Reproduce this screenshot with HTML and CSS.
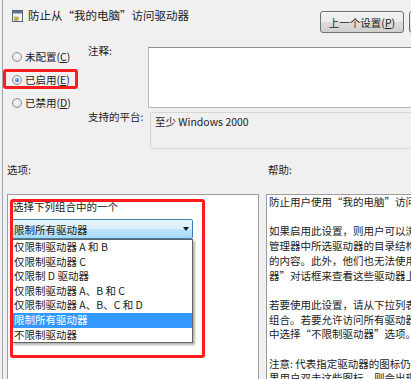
FILE: index.html
```html
<!DOCTYPE html>
<html lang="zh-CN">
<head>
    <meta charset="UTF-8">
    <meta name="viewport" content="width=device-width, initial-scale=1.0">
    <title>防止从“我的电脑”访问驱动器</title>
    <link rel="stylesheet" href="styles.css">
</head>
<body>
    <div class="dialog">
        <div class="head">
            <svg class="policy-icon" viewBox="0 0 11 12" width="11" height="12">
                <rect x="0.5" y="0.5" width="10" height="11" fill="#f3f5f8" stroke="#56677a"/>
                <rect x="1" y="1" width="9" height="2.5" fill="#5f7389"/>
                <rect x="2.2" y="7" width="4" height="3.4" fill="#e9c64c" stroke="#b28a1d" stroke-width="0.5"/>
                <path d="M2.9 8.7l1 1 1.6-2" stroke="#3b8b2e" fill="none" stroke-width="0.8"/>
            </svg>
            <div class="title">防止从“我的电脑”访问驱动器</div>
            <div class="nav">
                <button class="btn">上一个设置(<u>P</u>)</button>
                <button class="btn">下一个设置(<u>N</u>)</button>
            </div>
        </div>

        <div class="setup">
            <div class="states">
                <div class="state"><span class="radio"></span><span>未配置(<u>C</u>)</span></div>
                <div class="state"><span class="radio on"></span><span>已启用(<u>E</u>)</span></div>
                <div class="state"><span class="radio"></span><span>已禁用(<u>D</u>)</span></div>
            </div>
            <div class="fields">
                <span class="field-label">注释:</span>
                <div class="comment"></div>
                <span class="field-label platform-label">支持的平台:</span>
                <div class="platform">至少 Windows 2000</div>
            </div>
        </div>

        <div class="panes">
            <div class="pane-label">选项:</div>
            <div class="pane-label help-label">帮助:</div>
            <div class="pane options">
                <div class="caption">选择下列组合中的一个</div>
                <div class="select">
                    <span>限制所有驱动器</span>
                    <span class="arrow"></span>
                </div>
                <div class="list">
                    <div class="item">仅限制驱动器 A 和 B</div>
                    <div class="item">仅限制驱动器 C</div>
                    <div class="item">仅限制 D 驱动器</div>
                    <div class="item">仅限制驱动器 A、B 和 C</div>
                    <div class="item">仅限制驱动器 A、B、C 和 D</div>
                    <div class="item sel">限制所有驱动器</div>
                    <div class="item">不限制驱动器</div>
                </div>
            </div>
            <div class="pane help">
                <p>防止用户使用“我的电脑”访问所选驱动器的内容。</p>
                <p>如果启用此设置，则用户可以浏览“我的电脑”或 Windows 资源<br>管理器中所选驱动器的目录结构，但无法打开文件夹和访问其中<br>的内容。此外，他们也无法使用“运行”对话框或“映射网络驱动<br>器”对话框来查看这些驱动器上的目录。</p>
                <p>若要使用此设置，请从下拉列表中选择一个驱动器或驱动器<br>组合。若要允许访问所有驱动器，请禁用此设置或从下拉列表<br>中选择“不限制驱动器”选项。</p>
                <p>注意: 代表指定驱动器的图标仍会出现在“我的电脑”中，但如<br>果用户双击这些图标，则会出现一条消息，说明设置禁止此操作。</p>
            </div>
        </div>

        <div class="mark mark-state"></div>
        <div class="mark mark-options"></div>
    </div>
</body>
</html>
```

FILE: styles.css
```css
body {
    margin: 0;
    width: 411px;
    height: 379px;
    overflow: hidden;
    background-color: #f0f0f0;
    font-family: "Noto Sans CJK SC", sans-serif;
    font-size: 10.5px;
    color: #1b1b1b;
}

.dialog {
    position: relative;
    width: 470px;
    height: 379px;
    margin-left: 2px;
    border-left: 1px solid #9ba7b5;
}

/* title row */
.head {
    display: grid;
    grid-template-columns: 16px 292px auto;
    align-items: start;
    height: 40px;
    box-sizing: border-box;
    padding: 8px 0 0 9px;
}

.policy-icon {
    margin-top: 2px;
}

.title {
    font-size: 11.5px;
    line-height: 14px;
}

.nav {
    display: flex;
    gap: 5px;
    margin-top: 3px;
}

.btn {
    width: 84px;
    height: 22px;
    padding: 0;
    border: 1px solid #707070;
    border-radius: 3px;
    background: linear-gradient(#f2f2f2 0%, #ebebeb 50%, #dddddd 51%, #cfcfcf 100%);
    font: inherit;
    color: #1b1b1b;
}

/* state + comment */
.setup {
    display: grid;
    grid-template-columns: 85px 1fr;
    height: 109px;
}

.states {
    padding: 5px 0 0 9px;
}

.state {
    display: flex;
    align-items: center;
    gap: 3px;
    height: 23px;
}

.radio {
    position: relative;
    flex-shrink: 0;
    width: 10px;
    height: 10px;
    box-sizing: border-box;
    border: 1px solid #8f8f8f;
    border-radius: 50%;
    background: radial-gradient(circle at 50% 40%, #fbfbfb, #d6d6d6);
}

.radio.on::after {
    content: "";
    position: absolute;
    left: 2px;
    top: 2px;
    width: 4px;
    height: 4px;
    border-radius: 50%;
    background: radial-gradient(circle at 40% 35%, #7cc0f5, #1b4f8a);
}

.fields {
    display: grid;
    grid-template-columns: 60px 1fr;
    align-items: start;
    row-gap: 4px;
    padding-top: 7px;
}

.field-label {
    line-height: 14px;
    margin-top: -3px;
}

.platform-label {
    margin-top: -2px;
}

.comment {
    height: 61px;
    box-sizing: border-box;
    background-color: #fff;
    border: 1px solid #b5b8bf;
    border-top-color: #8e9095;
}

.platform {
    height: 37px;
    box-sizing: border-box;
    margin-left: 2px;
    padding: 2px 4px;
    line-height: 14px;
    border: 1px solid #d6d6d6;
    border-radius: 2px;
}

/* options + help */
.panes {
    display: grid;
    grid-template-columns: 252px 1fr;
    column-gap: 7px;
    row-gap: 17px;
    padding: 14px 0 0 4px;
}

.pane-label {
    line-height: 14px;
}

.help-label {
    padding-left: 2px;
}

.pane {
    height: 200px;
    box-sizing: border-box;
    background-color: #fff;
    border: 1px solid #9c9c9c;
}

.options {
    padding: 5px 0 0 4px;
}

.caption {
    padding-left: 1px;
    line-height: 14px;
}

.select {
    display: flex;
    align-items: center;
    justify-content: space-between;
    width: 181px;
    height: 20px;
    margin-top: 5px;
    box-sizing: border-box;
    padding: 0 3px 0 1px;
    border: 1px solid #3c7fb1;
    border-radius: 2px;
    background: linear-gradient(#eaf6fd 0%, #d9f0fc 48%, #bee6fd 52%, #a7d9f5 100%);
}

.arrow {
    width: 0;
    height: 0;
    border-left: 3.5px solid transparent;
    border-right: 3.5px solid transparent;
    border-top: 4px solid #1b1b1b;
}

.list {
    width: 181px;
    box-sizing: border-box;
    border: 1px solid #646464;
    background-color: #fff;
    box-shadow: 2px 2px 2px rgba(0, 0, 0, 0.3);
}

.item {
    height: 14.6px;
    line-height: 14.6px;
    padding-left: 1px;
    white-space: nowrap;
}

.item.sel {
    background-color: #3399ff;
    color: #fff;
}

.help {
    padding-left: 2px;
    overflow: hidden;
    line-height: 14.7px;
    white-space: nowrap;
}

.help p {
    margin: 0 0 14.7px;
}

/* red annotation frames */
.mark {
    position: absolute;
    box-sizing: border-box;
    border: 3px solid #ff1b1b;
    border-radius: 3px;
}

.mark-state {
    left: 0;
    top: 69px;
    width: 75px;
    height: 20px;
}

.mark-options {
    left: 7px;
    top: 199px;
    width: 195px;
    height: 159px;
}
```
